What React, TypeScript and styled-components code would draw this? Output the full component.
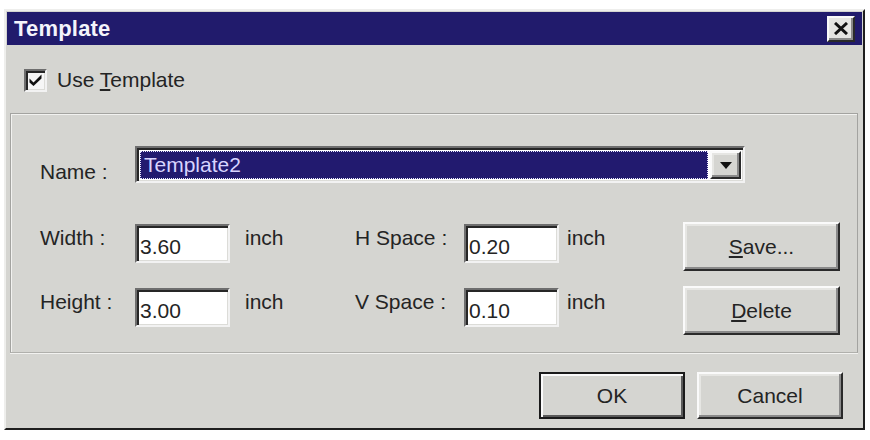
import React, { useState } from 'react';
import styled, { createGlobalStyle, css } from 'styled-components';

const GlobalStyle = createGlobalStyle`
  html, body {
    margin: 0;
    padding: 0;
    background: #ffffff;
  }
  body {
    font-family: "Liberation Sans", Arial, sans-serif;
    font-size: 21px;
    color: #242424;
  }
`;

const face = '#d5d5d1';

const raised = css`
  border: 2px solid;
  border-color: #fafafa #2a2a2a #2a2a2a #fafafa;
  box-shadow: inset -2px -2px 0 #8a8a8a, inset 2px 2px 0 #e6e6e3;
`;

const sunken = css`
  border: 2px solid;
  border-color: #6e6e6e #f2f2f2 #f2f2f2 #6e6e6e;
  box-shadow: inset 2px 2px 0 #262626, inset -1px -1px 0 #dcdcd8;
`;

const Dialog = styled.div`
  box-sizing: border-box;
  margin: 9px 0 0 4px;
  width: 861px;
  height: 421px;
  padding: 1px;
  background: ${face};
  border: 2px solid;
  border-color: #eeeeec #1e1e1e #1e1e1e #eeeeec;
  display: flex;
  flex-direction: column;
`;

const TitleBar = styled.div`
  height: 33px;
  flex: none;
  background: #211b6c;
  display: flex;
  align-items: center;
  justify-content: space-between;
  padding: 0 7px 0 7px;
`;

const Title = styled.span`
  color: #f4f4fb;
  font-weight: bold;
  font-size: 22px;
  letter-spacing: 0.2px;
`;

const CloseButton = styled.button`
  ${raised};
  box-sizing: border-box;
  width: 28px;
  height: 26px;
  padding: 0;
  background: #e4e4e1;
  display: flex;
  align-items: center;
  justify-content: center;
`;

const CheckRow = styled.label`
  height: 68px;
  flex: none;
  display: flex;
  align-items: center;
  padding-left: 17px;
  gap: 10px;
  box-sizing: border-box;
  padding-top: 2px;
`;

const CheckBox = styled.span`
  ${sunken};
  box-sizing: border-box;
  width: 23px;
  height: 23px;
  background: #f6f6f6;
  display: flex;
  align-items: center;
  justify-content: center;
`;

const Group = styled.div`
  box-sizing: border-box;
  height: 240px;
  flex: none;
  margin: 0 4px 0 3px;
  border: 1px solid #a3a3a0;
  border-bottom-color: #b0b0ac;
  box-shadow: inset 1px 1px 0 #f2f2f0, 0 1px 0 #f2f2f0;
  padding: 32px 0 0 29px;
`;

const NameRow = styled.div`
  display: flex;
  align-items: flex-start;
  height: 37px;
`;

const Label = styled.span<{ $top?: number }>`
  line-height: 24px;
  white-space: nowrap;
  margin-top: ${p => p.$top ?? 4}px;
`;

const NameLabel = styled(Label)`
  width: 95px;
  flex: none;
`;

const Combo = styled.div`
  ${sunken};
  box-sizing: border-box;
  width: 610px;
  height: 37px;
  background: #ffffff;
  display: flex;
  align-items: stretch;
  padding: 3px 2px 2px 3px;
`;

const Selection = styled.div`
  flex: 1;
  background: #221a6f;
  outline: 1px dotted #e8e8ff;
  outline-offset: -1px;
  color: #d8d4ff;
  line-height: 24px;
  padding: 2px 4px;
  margin-right: 2px;
`;

const ArrowButton = styled.div`
  ${raised};
  box-sizing: border-box;
  width: 31px;
  background: ${face};
  display: flex;
  align-items: center;
  justify-content: center;
`;

const SizeGrid = styled.div`
  margin-top: 39px;
  display: grid;
  grid-template-columns: 95px 95px 125px 109px 94px 125px 157px;
  grid-template-rows: 49px 49px;
  row-gap: 15px;
`;

const Unit = styled(Label)<{ $pad: number }>`
  padding-left: ${p => p.$pad}px;
`;

const Field = styled.input`
  ${sunken};
  box-sizing: border-box;
  align-self: start;
  margin: 2px 0 0;
  width: 95px;
  height: 39px;
  padding: 6px 4px 0 3px;
  background: #ffffff;
  font-family: "Liberation Sans", Arial, sans-serif;
  font-size: 21px;
  line-height: 24px;
  color: #242424;
  outline: none;
  display: block;
`;

const Button = styled.button<{ $default?: boolean }>`
  ${raised};
  box-sizing: border-box;
  background: ${face};
  font-family: "Liberation Sans", Arial, sans-serif;
  font-size: 21px;
  color: #242424;
  padding: 0;
  ${p => p.$default && css`
    outline: 2px solid #1a1a1a;
    outline-offset: -2px;
    border-color: #1a1a1a;
    box-shadow: inset 2px 2px 0 #fafafa, inset -2px -2px 0 #5a5a5a;
  `}
`;

const SideButton = styled(Button)`
  width: 157px;
  height: 49px;
`;

const Footer = styled.div`
  flex: 1;
  display: flex;
  justify-content: flex-end;
  align-items: flex-start;
  gap: 12px;
  padding: 19px 19px 0 0;
`;

const FooterButton = styled(Button)`
  width: 146px;
  height: 47px;
`;

function CheckMark() {
  return (
    <svg width="15" height="14" viewBox="0 0 15 14">
      <path d="M1.5 5.5 L5.5 9.5 L13.5 1.5 L13.5 5.5 L5.5 13 L1.5 9.5 Z" fill="#111" />
    </svg>
  );
}

export default function App() {
  const [values, setValues] = useState({ width: '3.60', height: '3.00', h: '0.20', v: '0.10' });
  const set = (k: keyof typeof values) => (e: React.ChangeEvent<HTMLInputElement>) =>
    setValues({ ...values, [k]: e.target.value });

  return (
    <>
      <GlobalStyle />
      <Dialog>
        <TitleBar>
          <Title>Template</Title>
          <CloseButton aria-label="Close">
            <svg width="14" height="13" viewBox="0 0 14 13">
              <path d="M1 1 L13 12 M13 1 L1 12" stroke="#111" strokeWidth="3" />
            </svg>
          </CloseButton>
        </TitleBar>
        <CheckRow>
          <CheckBox><CheckMark /></CheckBox>
          <span>Use <u>T</u>emplate</span>
        </CheckRow>
        <Group>
          <NameRow>
            <NameLabel $top={14}>Name :</NameLabel>
            <Combo>
              <Selection>Template2</Selection>
              <ArrowButton>
                <svg width="12" height="7" viewBox="0 0 12 7">
                  <path d="M0 0 H12 L6 7 Z" fill="#111" />
                </svg>
              </ArrowButton>
            </Combo>
          </NameRow>
          <SizeGrid>
            <Label>Width :</Label>
            <Field value={values.width} onChange={set('width')} />
            <Unit $pad={15}>inch</Unit>
            <Label>H Space :</Label>
            <Field value={values.h} onChange={set('h')} />
            <Unit $pad={9}>inch</Unit>
            <SideButton><u>S</u>ave...</SideButton>

            <Label>Height :</Label>
            <Field value={values.height} onChange={set('height')} />
            <Unit $pad={15}>inch</Unit>
            <Label>V Space :</Label>
            <Field value={values.v} onChange={set('v')} />
            <Unit $pad={9}>inch</Unit>
            <SideButton><u>D</u>elete</SideButton>
          </SizeGrid>
        </Group>
        <Footer>
          <FooterButton $default>OK</FooterButton>
          <FooterButton>Cancel</FooterButton>
        </Footer>
      </Dialog>
    </>
  );
}
